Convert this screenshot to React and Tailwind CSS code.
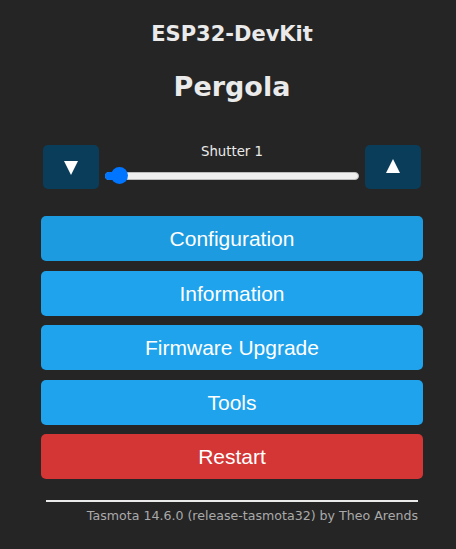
import React from "react";

function Btn({ children, color = "bg-[#1fa3ec]" }) {
  return (
    <button
      className={`w-full h-[45px] rounded-[5px] ${color} text-white text-[21px] leading-[45px] font-['Liberation_Sans',Arial,sans-serif]`}
    >
      {children}
    </button>
  );
}

export default function App() {
  return (
    <div className="min-h-[549px] w-full bg-[#252525] text-[#eaeaea] font-['DejaVu_Sans',Verdana,sans-serif]">
      <div className="w-[382px] ml-[41px] pt-[21px] flex flex-col">
        <h3 className="text-center font-bold text-[21px] leading-[26px]">ESP32-DevKit</h3>
        <h2 className="text-center font-bold text-[27px] leading-[34px] mt-[23px]">Pergola</h2>

        <div className="mt-[41px] mx-[2px] h-[44px] flex items-start">
          <button className="w-[56px] h-[44px] rounded-[5px] bg-[#0a3d5a] flex items-center justify-center">
            <svg width="16" height="16" viewBox="0 0 16 16">
              <polygon points="1,2 15,2 8,16" fill="#ffffff" />
            </svg>
          </button>
          <div className="flex-1 flex flex-col items-center px-[6px]">
            <div className="text-[13.3px] leading-[14px] text-[#eaeaea]">Shutter 1</div>
            <div className="relative w-full h-[18px] mt-[8px] flex items-center">
              <div className="w-full h-[8px] rounded-full bg-[#efefef] border border-[#bdbdbd]" />
              <div className="absolute left-0 top-[5px] h-[8px] w-[15px] rounded-l-full bg-[#0075ff]" />
              <div className="absolute left-[6px] top-0 w-[17px] h-[17px] rounded-full bg-[#0075ff]" />
            </div>
          </div>
          <button className="w-[56px] h-[44px] rounded-[5px] bg-[#0a3d5a] flex items-center justify-center">
            <svg width="16" height="16" viewBox="0 0 16 16">
              <polygon points="8,0 15,14 1,14" fill="#ffffff" />
            </svg>
          </button>
        </div>

        <div className="mt-[27px] flex flex-col gap-[9.5px]">
          <Btn color="bg-[#1d9be0]">Configuration</Btn>
          <Btn>Information</Btn>
          <Btn>Firmware Upgrade</Btn>
          <Btn>Tools</Btn>
          <Btn color="bg-[#d43535]">Restart</Btn>
        </div>

        <div className="mx-[5px] mt-[21px] h-[2px] bg-[#eaeaea]" />
        <div className="mx-[5px] mt-[6px] text-right text-[12.6px] leading-[16px] text-[#aaaaaa]">
          Tasmota 14.6.0 (release-tasmota32) by Theo Arends
        </div>
      </div>
    </div>
  );
}
